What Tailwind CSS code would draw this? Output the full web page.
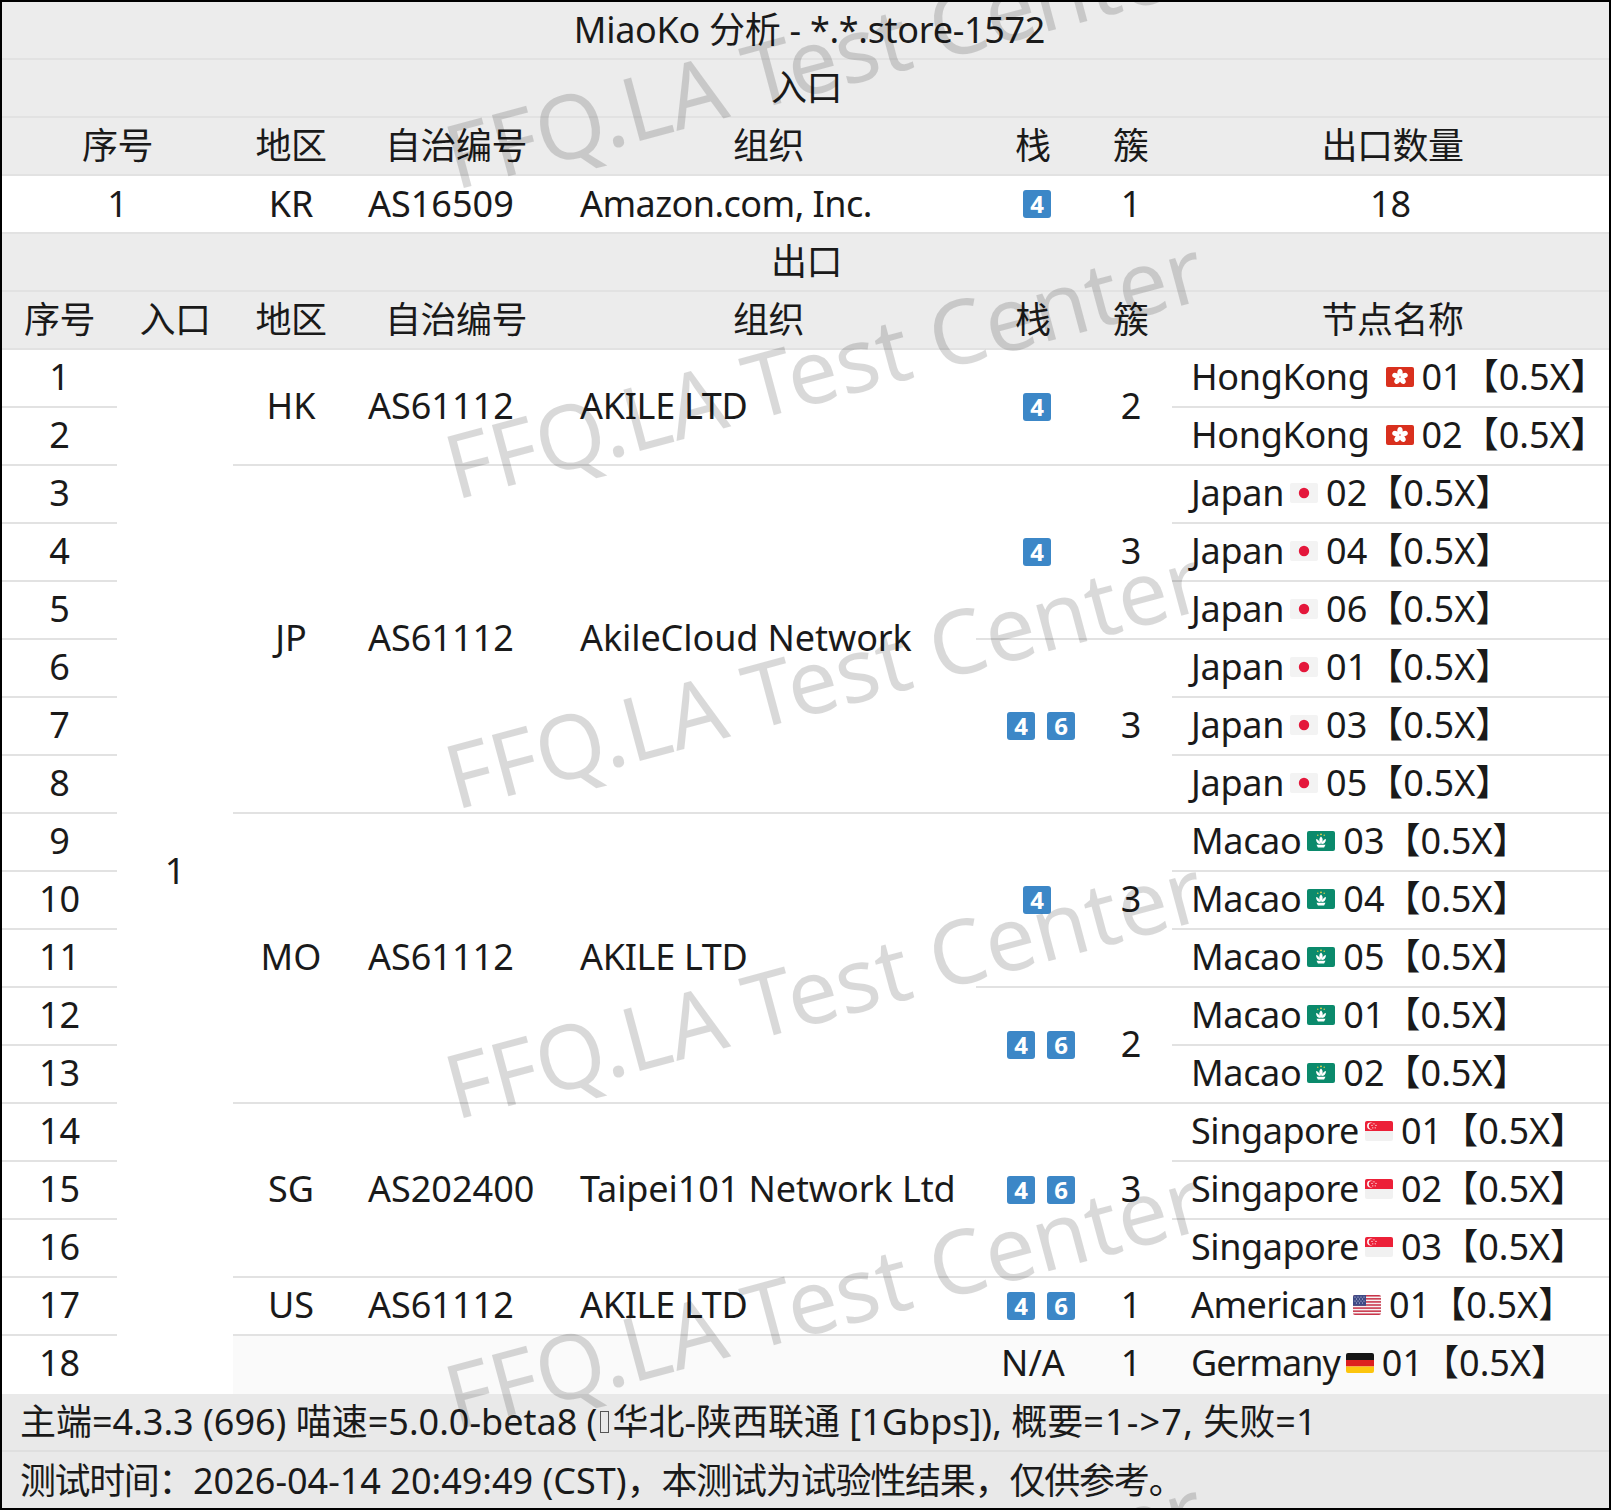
<!DOCTYPE html>
<html lang="zh-CN">
<head>
<meta charset="UTF-8">
<title>MiaoKo 分析</title>
<script src="https://cdn.jsdelivr.net/npm/@tailwindcss/browser@4"></script>
</head>
<body class="bg-white">
<!-- flag sprites -->
<svg class="hidden">
  <symbol id="hk" viewBox="0 0 28 20">
    <rect width="28" height="20" fill="#d9301e"/>
    <g fill="#fff">
      <ellipse cx="14" cy="5.800" rx="2.700" ry="3.900"/>
      <ellipse cx="14" cy="5.800" rx="2.700" ry="3.900" transform="rotate(72 14 10)"/>
      <ellipse cx="14" cy="5.800" rx="2.700" ry="3.900" transform="rotate(144 14 10)"/>
      <ellipse cx="14" cy="5.800" rx="2.700" ry="3.900" transform="rotate(216 14 10)"/>
      <ellipse cx="14" cy="5.800" rx="2.700" ry="3.900" transform="rotate(288 14 10)"/>
    </g>
    <circle cx="14" cy="10" r="1" fill="#e88"/>
  </symbol>
  <symbol id="jp" viewBox="0 0 28 20">
    <rect width="28" height="20" fill="#f3f3f3"/>
    <circle cx="14" cy="10" r="5.200" fill="#e4173b"/>
  </symbol>
  <symbol id="mo" viewBox="0 0 28 20">
    <rect width="28" height="20" fill="#0b8a6c"/>
    <path d="M14 5.500c2.200 2 2.400 4.500 0 7.500-2.400-3-2.200-5.500 0-7.500zM9 8c2.200.5 3.800 2.200 4.500 5-2.800 0-4.500-2-4.500-5zM19 8c-2.200.5-3.800 2.200-4.500 5 2.800 0 4.500-2 4.500-5zM9.500 13.800h9l-1.400 2.600h-6.200z" fill="#fff"/>
    <g fill="#f2d64b"><circle cx="14" cy="3.300" r=".9"/><circle cx="10.800" cy="4.300" r=".7"/><circle cx="17.200" cy="4.300" r=".7"/></g>
  </symbol>
  <symbol id="sg" viewBox="0 0 28 20">
    <rect width="28" height="20" fill="#f1f1f1"/>
    <rect width="28" height="10" fill="#ec2038"/>
    <circle cx="5.500" cy="5" r="3.400" fill="#fff"/>
    <circle cx="6.800" cy="5" r="3.100" fill="#ec2038"/>
    <g fill="#fff"><circle cx="9" cy="2.800" r=".6"/><circle cx="7" cy="4.400" r=".6"/><circle cx="11" cy="4.400" r=".6"/><circle cx="7.800" cy="6.800" r=".6"/><circle cx="10.200" cy="6.800" r=".6"/></g>
  </symbol>
  <symbol id="us" viewBox="0 0 28 20">
    <rect width="28" height="20" fill="#f7f3f3"/>
    <g fill="#c8354a">
      <rect width="28" height="1.540"/><rect y="3.080" width="28" height="1.540"/><rect y="6.150" width="28" height="1.540"/><rect y="9.230" width="28" height="1.540"/><rect y="12.310" width="28" height="1.540"/><rect y="15.380" width="28" height="1.540"/><rect y="18.460" width="28" height="1.540"/>
    </g>
    <rect width="13" height="10.800" fill="#3f4a86"/>
    <g fill="#d6d9ea">
      <circle cx="2" cy="2" r=".6"/><circle cx="5" cy="2" r=".6"/><circle cx="8" cy="2" r=".6"/><circle cx="11" cy="2" r=".6"/>
      <circle cx="3.500" cy="4" r=".6"/><circle cx="6.500" cy="4" r=".6"/><circle cx="9.500" cy="4" r=".6"/>
      <circle cx="2" cy="6" r=".6"/><circle cx="5" cy="6" r=".6"/><circle cx="8" cy="6" r=".6"/><circle cx="11" cy="6" r=".6"/>
      <circle cx="3.500" cy="8" r=".6"/><circle cx="6.500" cy="8" r=".6"/><circle cx="9.500" cy="8" r=".6"/>
    </g>
  </symbol>
  <symbol id="de" viewBox="0 0 28 20">
    <rect width="28" height="7" fill="#161616"/>
    <rect y="7" width="28" height="6.500" fill="#dd1f1f"/>
    <rect y="13.500" width="28" height="6.500" fill="#fcc50e"/>
  </symbol>
</svg>

<div class="relative w-[1611px] h-[1510px] overflow-hidden border-2 border-black text-[36px] text-[#1a1a1a] font-['Noto_Sans','Noto_Sans_CJK_SC',sans-serif]">
  <div class="grid grid-cols-[115px_116px_116px_212px_415px_114px_82px_437px] grid-rows-[repeat(26,58px)]">

    <!-- title + inbound -->
    <div class="col-span-8 flex items-center justify-center bg-[#ececec] border-b-2 border-[#e2e2e2] pl-2 tracking-[-0.3px]">MiaoKo 分析 - *.*.store-1572</div>
    <div class="col-span-8 flex items-center justify-center bg-[#ececec] border-b-2 border-[#e2e2e2] pl-0.5 tracking-[-0.5px]">入口</div>
    <div class="col-span-2 flex items-center justify-center bg-[#ececec] border-b-2 border-[#e2e2e2] tracking-[-0.5px]">序号</div>
    <div class="flex items-center justify-center bg-[#ececec] border-b-2 border-[#e2e2e2] tracking-[-0.5px]">地区</div>
    <div class="flex items-center justify-center bg-[#ececec] border-b-2 border-[#e2e2e2] pl-0.5 tracking-[-0.5px]">自治编号</div>
    <div class="flex items-center justify-center bg-[#ececec] border-b-2 border-[#e2e2e2] tracking-[-0.5px]">组织</div>
    <div class="flex items-center justify-center bg-[#ececec] border-b-2 border-[#e2e2e2]">栈</div>
    <div class="flex items-center justify-center bg-[#ececec] border-b-2 border-[#e2e2e2]">簇</div>
    <div class="flex items-center justify-center bg-[#ececec] border-b-2 border-[#e2e2e2] pl-1 tracking-[-0.5px]">出口数量</div>

    <div class="col-span-2 flex items-center justify-center border-b-2 border-[#e2e2e2]">1</div>
    <div class="flex items-center justify-center border-b-2 border-[#e2e2e2]">KR</div>
    <div class="flex items-center pl-[19px] border-b-2 border-[#e2e2e2]">AS16509</div>
    <div class="flex items-center pl-[19px] border-b-2 border-[#e2e2e2] tracking-[-0.55px]">Amazon.com, Inc.</div>
    <div class="flex items-center justify-center gap-3 pl-2 border-b-2 border-[#e2e2e2]"><span class="flex size-7 items-center justify-center rounded-[3px] bg-[#3c87c7] text-2xl font-bold text-white">4</span></div>
    <div class="flex items-center justify-center border-b-2 border-[#e2e2e2]">1</div>
    <div class="flex items-center justify-center border-b-2 border-[#e2e2e2]">18</div>

    <!-- outbound -->
    <div class="col-span-8 flex items-center justify-center bg-[#ececec] border-b-2 border-[#e2e2e2] pl-0.5 tracking-[-0.5px]">出口</div>
    <div class="flex items-center justify-center bg-[#ececec] border-b-2 border-[#e2e2e2] tracking-[-0.5px]">序号</div>
    <div class="flex items-center justify-center bg-[#ececec] border-b-2 border-[#e2e2e2] tracking-[-0.5px]">入口</div>
    <div class="flex items-center justify-center bg-[#ececec] border-b-2 border-[#e2e2e2] tracking-[-0.5px]">地区</div>
    <div class="flex items-center justify-center bg-[#ececec] border-b-2 border-[#e2e2e2] pl-0.5 tracking-[-0.5px]">自治编号</div>
    <div class="flex items-center justify-center bg-[#ececec] border-b-2 border-[#e2e2e2] tracking-[-0.5px]">组织</div>
    <div class="flex items-center justify-center bg-[#ececec] border-b-2 border-[#e2e2e2]">栈</div>
    <div class="flex items-center justify-center bg-[#ececec] border-b-2 border-[#e2e2e2]">簇</div>
    <div class="flex items-center justify-center bg-[#ececec] border-b-2 border-[#e2e2e2] pl-1 tracking-[-0.5px]">节点名称</div>

    <!-- HK -->
    <div class="flex items-center justify-center pb-0.5 border-b-2 border-[#e2e2e2]">1</div>
    <div class="row-span-18 flex items-center justify-center pb-0.5">1</div>
    <div class="row-span-2 flex items-center justify-center pb-0.5 border-b-2 border-[#e2e2e2]">HK</div>
    <div class="row-span-2 flex items-center pl-[19px] pb-0.5 border-b-2 border-[#e2e2e2]">AS61112</div>
    <div class="row-span-2 flex items-center pl-[19px] pb-0.5 border-b-2 border-[#e2e2e2] tracking-[-0.3px]">AKILE LTD</div>
    <div class="row-span-2 flex items-center justify-center gap-3 pl-2 border-b-2 border-[#e2e2e2]"><span class="flex size-7 items-center justify-center rounded-[3px] bg-[#3c87c7] text-2xl font-bold text-white">4</span></div>
    <div class="row-span-2 flex items-center justify-center pb-0.5 border-b-2 border-[#e2e2e2]">2</div>
    <div class="flex items-center pl-[19px] pb-0.5 border-b-2 border-[#e2e2e2]"><span class="tracking-[-0.35px]">HongKong</span><svg class="ml-4 mr-2 h-5 w-7 rounded-[2px]"><use href="#hk"/></svg>01【0.5X】</div>
    <div class="flex items-center justify-center pb-0.5 border-b-2 border-[#e2e2e2]">2</div>
    <div class="flex items-center pl-[19px] pb-0.5 border-b-2 border-[#e2e2e2]"><span class="tracking-[-0.35px]">HongKong</span><svg class="ml-4 mr-2 h-5 w-7 rounded-[2px]"><use href="#hk"/></svg>02【0.5X】</div>

    <!-- JP -->
    <div class="flex items-center justify-center pb-0.5 border-b-2 border-[#e2e2e2]">3</div>
    <div class="row-span-6 flex items-center justify-center pb-0.5 border-b-2 border-[#e2e2e2]">JP</div>
    <div class="row-span-6 flex items-center pl-[19px] pb-0.5 border-b-2 border-[#e2e2e2]">AS61112</div>
    <div class="row-span-6 flex items-center pl-[19px] pb-0.5 border-b-2 border-[#e2e2e2] tracking-[-0.1px]">AkileCloud Network</div>
    <div class="row-span-3 flex items-center justify-center gap-3 pl-2 border-b-2 border-[#e2e2e2]"><span class="flex size-7 items-center justify-center rounded-[3px] bg-[#3c87c7] text-2xl font-bold text-white">4</span></div>
    <div class="row-span-3 flex items-center justify-center pb-0.5 border-b-2 border-[#e2e2e2]">3</div>
    <div class="flex items-center pl-[19px] pb-0.5 border-b-2 border-[#e2e2e2]"><span class="tracking-[-0.3px]">Japan</span><svg class="ml-1.5 mr-2 h-5 w-7 rounded-[2px]"><use href="#jp"/></svg>02【0.5X】</div>
    <div class="flex items-center justify-center pb-0.5 border-b-2 border-[#e2e2e2]">4</div>
    <div class="flex items-center pl-[19px] pb-0.5 border-b-2 border-[#e2e2e2]"><span class="tracking-[-0.3px]">Japan</span><svg class="ml-1.5 mr-2 h-5 w-7 rounded-[2px]"><use href="#jp"/></svg>04【0.5X】</div>
    <div class="flex items-center justify-center pb-0.5 border-b-2 border-[#e2e2e2]">5</div>
    <div class="flex items-center pl-[19px] pb-0.5 border-b-2 border-[#e2e2e2]"><span class="tracking-[-0.3px]">Japan</span><svg class="ml-1.5 mr-2 h-5 w-7 rounded-[2px]"><use href="#jp"/></svg>06【0.5X】</div>
    <div class="flex items-center justify-center pb-0.5 border-b-2 border-[#e2e2e2]">6</div>
    <div class="row-span-3 flex items-center justify-center gap-3 pl-4 border-b-2 border-[#e2e2e2]"><span class="flex size-7 items-center justify-center rounded-[3px] bg-[#3c87c7] text-2xl font-bold text-white">4</span><span class="flex size-7 items-center justify-center rounded-[3px] bg-[#3c87c7] text-2xl font-bold text-white">6</span></div>
    <div class="row-span-3 flex items-center justify-center pb-0.5 border-b-2 border-[#e2e2e2]">3</div>
    <div class="flex items-center pl-[19px] pb-0.5 border-b-2 border-[#e2e2e2]"><span class="tracking-[-0.3px]">Japan</span><svg class="ml-1.5 mr-2 h-5 w-7 rounded-[2px]"><use href="#jp"/></svg>01【0.5X】</div>
    <div class="flex items-center justify-center pb-0.5 border-b-2 border-[#e2e2e2]">7</div>
    <div class="flex items-center pl-[19px] pb-0.5 border-b-2 border-[#e2e2e2]"><span class="tracking-[-0.3px]">Japan</span><svg class="ml-1.5 mr-2 h-5 w-7 rounded-[2px]"><use href="#jp"/></svg>03【0.5X】</div>
    <div class="flex items-center justify-center pb-0.5 border-b-2 border-[#e2e2e2]">8</div>
    <div class="flex items-center pl-[19px] pb-0.5 border-b-2 border-[#e2e2e2]"><span class="tracking-[-0.3px]">Japan</span><svg class="ml-1.5 mr-2 h-5 w-7 rounded-[2px]"><use href="#jp"/></svg>05【0.5X】</div>

    <!-- MO -->
    <div class="flex items-center justify-center pb-0.5 border-b-2 border-[#e2e2e2]">9</div>
    <div class="row-span-5 flex items-center justify-center pb-0.5 border-b-2 border-[#e2e2e2]">MO</div>
    <div class="row-span-5 flex items-center pl-[19px] pb-0.5 border-b-2 border-[#e2e2e2]">AS61112</div>
    <div class="row-span-5 flex items-center pl-[19px] pb-0.5 border-b-2 border-[#e2e2e2] tracking-[-0.3px]">AKILE LTD</div>
    <div class="row-span-3 flex items-center justify-center gap-3 pl-2 border-b-2 border-[#e2e2e2]"><span class="flex size-7 items-center justify-center rounded-[3px] bg-[#3c87c7] text-2xl font-bold text-white">4</span></div>
    <div class="row-span-3 flex items-center justify-center pb-0.5 border-b-2 border-[#e2e2e2]">3</div>
    <div class="flex items-center pl-[19px] pb-0.5 border-b-2 border-[#e2e2e2]"><span class="tracking-[-0.35px]">Macao</span><svg class="ml-1.5 mr-2 h-5 w-7 rounded-[2px]"><use href="#mo"/></svg>03【0.5X】</div>
    <div class="flex items-center justify-center pb-0.5 border-b-2 border-[#e2e2e2]">10</div>
    <div class="flex items-center pl-[19px] pb-0.5 border-b-2 border-[#e2e2e2]"><span class="tracking-[-0.35px]">Macao</span><svg class="ml-1.5 mr-2 h-5 w-7 rounded-[2px]"><use href="#mo"/></svg>04【0.5X】</div>
    <div class="flex items-center justify-center pb-0.5 border-b-2 border-[#e2e2e2]">11</div>
    <div class="flex items-center pl-[19px] pb-0.5 border-b-2 border-[#e2e2e2]"><span class="tracking-[-0.35px]">Macao</span><svg class="ml-1.5 mr-2 h-5 w-7 rounded-[2px]"><use href="#mo"/></svg>05【0.5X】</div>
    <div class="flex items-center justify-center pb-0.5 border-b-2 border-[#e2e2e2]">12</div>
    <div class="row-span-2 flex items-center justify-center gap-3 pl-4 border-b-2 border-[#e2e2e2]"><span class="flex size-7 items-center justify-center rounded-[3px] bg-[#3c87c7] text-2xl font-bold text-white">4</span><span class="flex size-7 items-center justify-center rounded-[3px] bg-[#3c87c7] text-2xl font-bold text-white">6</span></div>
    <div class="row-span-2 flex items-center justify-center pb-0.5 border-b-2 border-[#e2e2e2]">2</div>
    <div class="flex items-center pl-[19px] pb-0.5 border-b-2 border-[#e2e2e2]"><span class="tracking-[-0.35px]">Macao</span><svg class="ml-1.5 mr-2 h-5 w-7 rounded-[2px]"><use href="#mo"/></svg>01【0.5X】</div>
    <div class="flex items-center justify-center pb-0.5 border-b-2 border-[#e2e2e2]">13</div>
    <div class="flex items-center pl-[19px] pb-0.5 border-b-2 border-[#e2e2e2]"><span class="tracking-[-0.35px]">Macao</span><svg class="ml-1.5 mr-2 h-5 w-7 rounded-[2px]"><use href="#mo"/></svg>02【0.5X】</div>

    <!-- SG -->
    <div class="flex items-center justify-center pb-0.5 border-b-2 border-[#e2e2e2]">14</div>
    <div class="row-span-3 flex items-center justify-center pb-0.5 border-b-2 border-[#e2e2e2]">SG</div>
    <div class="row-span-3 flex items-center pl-[19px] pb-0.5 border-b-2 border-[#e2e2e2]">AS202400</div>
    <div class="row-span-3 flex items-center pl-[19px] pb-0.5 border-b-2 border-[#e2e2e2] tracking-[-0.1px]">Taipei101 Network Ltd</div>
    <div class="row-span-3 flex items-center justify-center gap-3 pl-4 border-b-2 border-[#e2e2e2]"><span class="flex size-7 items-center justify-center rounded-[3px] bg-[#3c87c7] text-2xl font-bold text-white">4</span><span class="flex size-7 items-center justify-center rounded-[3px] bg-[#3c87c7] text-2xl font-bold text-white">6</span></div>
    <div class="row-span-3 flex items-center justify-center pb-0.5 border-b-2 border-[#e2e2e2]">3</div>
    <div class="flex items-center pl-[19px] pb-0.5 border-b-2 border-[#e2e2e2]"><span class="tracking-[-0.45px]">Singapore</span><svg class="ml-1.5 mr-2 h-5 w-7 rounded-[2px]"><use href="#sg"/></svg>01【0.5X】</div>
    <div class="flex items-center justify-center pb-0.5 border-b-2 border-[#e2e2e2]">15</div>
    <div class="flex items-center pl-[19px] pb-0.5 border-b-2 border-[#e2e2e2]"><span class="tracking-[-0.45px]">Singapore</span><svg class="ml-1.5 mr-2 h-5 w-7 rounded-[2px]"><use href="#sg"/></svg>02【0.5X】</div>
    <div class="flex items-center justify-center pb-0.5 border-b-2 border-[#e2e2e2]">16</div>
    <div class="flex items-center pl-[19px] pb-0.5 border-b-2 border-[#e2e2e2]"><span class="tracking-[-0.45px]">Singapore</span><svg class="ml-1.5 mr-2 h-5 w-7 rounded-[2px]"><use href="#sg"/></svg>03【0.5X】</div>

    <!-- US -->
    <div class="flex items-center justify-center pb-0.5 border-b-2 border-[#e2e2e2]">17</div>
    <div class="flex items-center justify-center pb-0.5 border-b-2 border-[#e2e2e2]">US</div>
    <div class="flex items-center pl-[19px] pb-0.5 border-b-2 border-[#e2e2e2]">AS61112</div>
    <div class="flex items-center pl-[19px] pb-0.5 border-b-2 border-[#e2e2e2] tracking-[-0.3px]">AKILE LTD</div>
    <div class="flex items-center justify-center gap-3 pl-4 border-b-2 border-[#e2e2e2]"><span class="flex size-7 items-center justify-center rounded-[3px] bg-[#3c87c7] text-2xl font-bold text-white">4</span><span class="flex size-7 items-center justify-center rounded-[3px] bg-[#3c87c7] text-2xl font-bold text-white">6</span></div>
    <div class="flex items-center justify-center pb-0.5 border-b-2 border-[#e2e2e2]">1</div>
    <div class="flex items-center pl-[19px] pb-0.5 border-b-2 border-[#e2e2e2]"><span class="tracking-[-0.6px]">American</span><svg class="ml-1.5 mr-2 h-5 w-7 rounded-[2px]"><use href="#us"/></svg>01【0.5X】</div>

    <!-- failed row, no region data -->
    <div class="flex items-center justify-center pb-1">18</div>
    <div class="bg-[#fafafa]"></div>
    <div class="bg-[#fafafa]"></div>
    <div class="bg-[#fafafa]"></div>
    <div class="flex items-center justify-center pb-1 bg-[#fafafa]">N/A</div>
    <div class="flex items-center justify-center pb-1 bg-[#fafafa]">1</div>
    <div class="flex items-center pl-[19px] pb-1 bg-[#fafafa]"><span class="tracking-[-1px]">Germany</span><svg class="ml-1.5 mr-2 h-5 w-7 rounded-[2px]"><use href="#de"/></svg>01【0.5X】</div>

    <!-- footer -->
    <div class="col-span-8 flex items-center whitespace-pre pl-[18px] bg-[#e9e9e9] border-b-2 border-[#dfdfdf]">主端=4.3.3 (696) 喵速=5.0.0-beta8 (<span class="mx-[3px] h-[22px] w-[9px] border border-[#555]"></span>华北-陕西联通 [1Gbps]), 概要<span class="tracking-[1.2px]">=1-&gt;7,</span> 失败=1</div>
    <div class="col-span-8 flex items-center whitespace-pre pl-[18px] bg-[#e9e9e9]"><span class="tracking-[-1.4px]">测试时间：</span>2026-04-14 20:49:49 (CST)<span class="tracking-[-1.2px]">，本测试为试验性结果，仅供参考。</span></div>
  </div>

  <!-- watermark -->
  <span class="absolute left-[456px] top-[109px] origin-bottom-left rotate-[-15deg] whitespace-nowrap text-[89px] leading-none text-black/[0.15]">FFQ.LA Test Center</span>
  <span class="absolute left-[456px] top-[419px] origin-bottom-left rotate-[-15deg] whitespace-nowrap text-[89px] leading-none text-black/[0.15]">FFQ.LA Test Center</span>
  <span class="absolute left-[456px] top-[729px] origin-bottom-left rotate-[-15deg] whitespace-nowrap text-[89px] leading-none text-black/[0.15]">FFQ.LA Test Center</span>
  <span class="absolute left-[456px] top-[1039px] origin-bottom-left rotate-[-15deg] whitespace-nowrap text-[89px] leading-none text-black/[0.15]">FFQ.LA Test Center</span>
  <span class="absolute left-[456px] top-[1349px] origin-bottom-left rotate-[-15deg] whitespace-nowrap text-[89px] leading-none text-black/[0.15]">FFQ.LA Test Center</span>
  <span class="absolute left-[456px] top-[1659px] origin-bottom-left rotate-[-15deg] whitespace-nowrap text-[89px] leading-none text-black/[0.15]">FFQ.LA Test Center</span>
</div>
</body>
</html>
